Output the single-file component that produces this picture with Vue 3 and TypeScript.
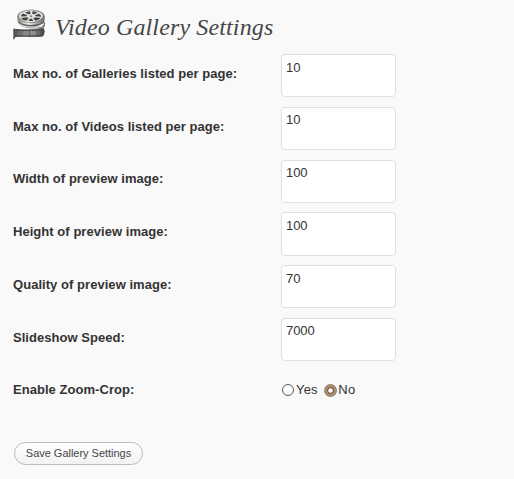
<script setup lang="ts">
import { ref } from 'vue'

interface Field {
  id: string
  label: string
  value: string
}

const fields = ref<Field[]>([
  { id: 'galleries', label: 'Max no. of Galleries listed per page:', value: '10' },
  { id: 'videos', label: 'Max no. of Videos listed per page:', value: '10' },
  { id: 'width', label: 'Width of preview image:', value: '100' },
  { id: 'height', label: 'Height of preview image:', value: '100' },
  { id: 'quality', label: 'Quality of preview image:', value: '70' },
  { id: 'speed', label: 'Slideshow Speed:', value: '7000' },
])

const zoomCrop = ref<'yes' | 'no'>('no')
</script>

<template>
  <main class="page">
    <header class="heading">
      <svg class="reel" viewBox="0 0 34 34" aria-hidden="true">
        <defs>
          <linearGradient id="film" x1="0" x2="1">
            <stop offset="0" stop-color="#484a47" />
            <stop offset=".3" stop-color="#858783" />
            <stop offset=".7" stop-color="#8d8f8b" />
            <stop offset="1" stop-color="#3a3c3a" />
          </linearGradient>
          <linearGradient id="rim" x1="0" x2="1">
            <stop offset="0" stop-color="#888" />
            <stop offset=".4" stop-color="#f7f7f4" />
            <stop offset="1" stop-color="#666" />
          </linearGradient>
        </defs>
        <path d="M26 19c4-1 5-3 5-6 1.500 3 1 5-.5 7 1.500 2 1.500 5 0 7.500l-2 1.500h-5z" fill="url(#film)" />
        <path d="M4.500 8.500v4c2 7 25 7 27 0v-4z" fill="url(#rim)" />
        <path d="M5 12.800c3 5.500 23 5.500 26 0v1.400c-3 5-22 6.500-26 .3z" fill="#5a5c58" />
        <path d="M5.200 14.800c1 3 7 5.400 14 5.700h7l3.500-2c-7 0-18 .3-24.500-3.700z" fill="#858783" />
        <path d="M5 15.200c4 3.500 12 4.300 18 4 4 0 7-1 8-3" fill="none" stroke="#e5e5e1" stroke-width="1" />
        <ellipse cx="18" cy="8.400" rx="13.400" ry="6.400" fill="url(#rim)" stroke="#777" stroke-width=".7" />
        <ellipse cx="18" cy="8.100" rx="11.900" ry="5.400" fill="#e3e4e0" />
        <g fill="#424440">
          <path d="M12 4.700q2.500-1.600 5-1.500l.6 2.700-2 .4z" />
          <path d="M19.500 3.200q3 0 5.200 1.500l-3.800 1.600-1.600-.4z" />
          <path d="M10.200 5.500l3.900 1.700-.5 1.100-5.800.2q.2-1.900 2.400-3z" />
          <path d="M26 5.700q2.200 1.300 2.300 3l-5.500-.4-.9-1z" />
          <path d="M8 9.900l6-.6 1.700.8-2.500 2.600q-4-.8-5.200-2.800z" />
          <path d="M22.200 9.200l5.500.8q-1.400 2-5.200 2.800l-2.300-2.400z" />
          <path d="M17 10.700h2l1.400 2.400h-5z" />
          <ellipse cx="18" cy="8.100" rx="1.300" ry=".6" />
        </g>
        <path d="M.5 20.700c9 1.200 20 .7 28.500-.5l2 .5-.5 7.200c-9 2-20 .5-28 1.100L.5 32z" fill="url(#film)" />
        <path d="M1 21.600c9 1.200 19 1 28 0M2 28.100c9-.7 18 .8 27-.8" fill="none" stroke="#333" stroke-width="1.200" />
        <path d="M2 21.700c9 1.100 18 1 27 .1M2.500 28c9-.6 18 .7 26.500-.7" fill="none" stroke="#aaaca8" stroke-width=".6" stroke-dasharray="1 1.300" />
        <path d="M1 20.700V31M9 22.500v5M16.500 22.500v5M24 22.500v5" stroke="#51534f" stroke-width=".7" />
      </svg>
      <h1>Video Gallery Settings</h1>
    </header>

    <form @submit.prevent>
      <div v-for="field in fields" :key="field.id" class="row">
        <label :for="field.id">{{ field.label }}</label>
        <textarea :id="field.id" v-model="field.value" spellcheck="false"></textarea>
      </div>
      <div class="row choice-row">
        <span class="label">Enable Zoom-Crop:</span>
        <div class="choices">
          <label class="choice"><input v-model="zoomCrop" type="radio" name="zoom" value="yes" />Yes</label>
          <label class="choice"><input v-model="zoomCrop" type="radio" name="zoom" value="no" />No</label>
        </div>
      </div>
      <button type="submit">Save Gallery Settings</button>
    </form>
  </main>
</template>

<style>
body {
  background: #f9f9f9;
}
</style>

<style scoped>
.page {
  box-sizing: border-box;
  height: 479px;
  padding: 8px 13px 0;
  overflow: hidden;
  background: #f9f9f9;
  color: #333;
  font: 13px/18px "Liberation Sans", Arial, sans-serif;
}

.heading {
  display: flex;
  height: 41px;
  gap: 8px;
}

.reel {
  width: 34px;
  height: 34px;
}

h1 {
  margin: 2px 0 0;
  color: #464646;
  font: italic 24px/35px "Liberation Serif", Georgia, serif;
  letter-spacing: 0.13px;
}

.row {
  display: grid;
  grid-template-columns: 268px 1fr;
  height: 52.75px;
  align-items: start;
  padding-top: 5px;
  box-sizing: border-box;
}

.row > label,
.label {
  padding-top: 10.9px;
  font-weight: bold;
  letter-spacing: 0.045px;
}

textarea {
  box-sizing: border-box;
  display: block;
  width: 115px;
  height: 43.3px;
  margin: 0;
  padding: 3.7px 4px 4px;
  border: 1px solid #dfdfdf;
  border-radius: 4px;
  outline: none;
  resize: none;
  overflow: hidden;
  background: #fff;
  color: #333;
  font: 13px/18px "Liberation Sans", Arial, sans-serif;
  letter-spacing: -0.1px;
}

.choices {
  display: flex;
  gap: 6px;
  padding: 10.9px 0 0 1px;
}

.choice {
  display: flex;
  align-items: center;
  gap: 2px;
  letter-spacing: 0.2px;
}

input {
  appearance: none;
  box-sizing: border-box;
  width: 12px;
  height: 12px;
  margin: 0;
  border: 1px solid #555;
  border-radius: 50%;
  background: #fff;
}

input:checked {
  width: 13px;
  margin-right: -0.5px;
  height: 13px;
  border-color: #8d7967;
  background: radial-gradient(circle, #fff 0 1.8px, #7b6048 2.6px 3px, #b08e70 4px);
}

button {
  display: block;
  box-sizing: border-box;
  width: 129px;
  height: 23px;
  margin: 23.75px 0 0 1px;
  padding: 0;
  border: 1px solid #bbb;
  border-radius: 12px;
  background: linear-gradient(#fff, #f2f2f2);
  color: #464646;
  font: 11px/19px "Liberation Sans", Arial, sans-serif;
  letter-spacing: -0.02px;
}
</style>
